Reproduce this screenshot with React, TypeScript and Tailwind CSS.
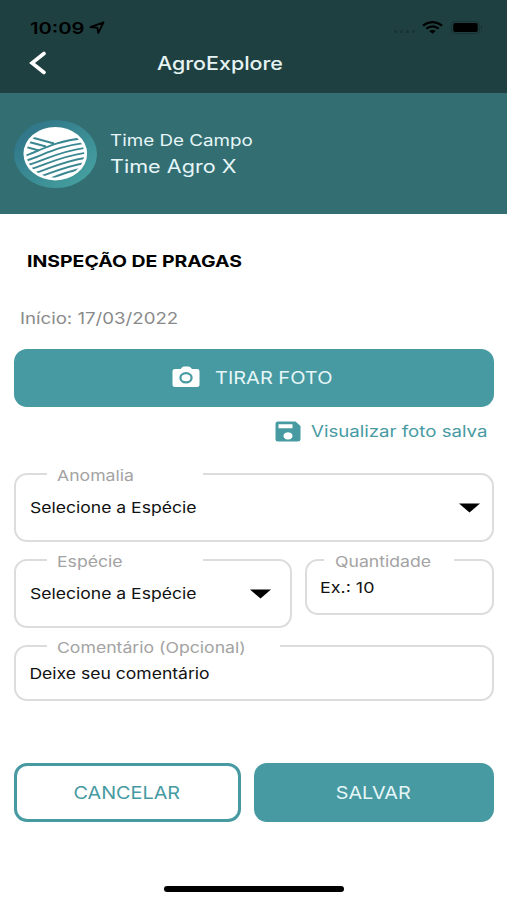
import React, { useState } from 'react';

interface FieldProps {
  label: string;
  className: string;
  notch: string;
  children: React.ReactNode;
}

const Field = ({ label, className, notch, children }: FieldProps) => (
  <div className={`relative rounded-[13px] border-2 border-[#dcdcdc] ${className}`}>
    <div className={`absolute -top-[9.5px] flex h-5 items-center bg-white ${notch}`}>
      <span className="inline-block origin-left scale-x-[1.175] whitespace-nowrap text-[15px] leading-[18px] text-[#a3a3a3]">
        {label}
      </span>
    </div>
    {children}
  </div>
);

const Caret = () => (
  <svg width="21" height="10" viewBox="0 0 21 10">
    <path d="M0 0.5h21L10.5 9.5z" fill="#000" />
  </svg>
);

const Logo = () => (
  <svg width="83" height="68" viewBox="0 0 83 68">
    <defs>
      <linearGradient id="ring" x1="0" y1="0" x2="1" y2="1">
        <stop offset="0.1" stopColor="#2f7488" />
        <stop offset="0.9" stopColor="#45a09f" />
      </linearGradient>
      <clipPath id="disc">
        <ellipse cx="41.3" cy="33.7" rx="29" ry="24" />
      </clipPath>
    </defs>
    <ellipse cx="41.5" cy="34" rx="41.5" ry="34" fill="url(#ring)" />
    <ellipse cx="41.3" cy="33.7" rx="31.8" ry="26.7" fill="#fff" />
    <g clipPath="url(#disc)" fill="none" stroke="#3a8792" strokeWidth="1.9">
      <path d="M18 17.5L40 23.5" />
      <path d="M15 22L32 26.5" />
      <path d="M12 27L25 30.5" />
      <path d="M12 35.5C26 31 38 21.5 70 18" />
      <path d="M12 40.5C28 36 42 26 74 22.5" />
      <path d="M12 45.5C30 41 44 31 74 27.5" />
      <path d="M14 50C32 45 46 36 74 32.5" />
      <path d="M18 54C36 49 48 41 74 37.5" />
      <path d="M24 57.5C40 52 52 46 74 42.5" />
      <path d="M34 59.5C46 54.5 56 51 70 48" />
    </g>
  </svg>
);

const App = () => {
  const [species] = useState('Selecione a Espécie');

  return (
    <div className="flex h-[900px] w-[507px] flex-col bg-white font-['Inter','Liberation_Sans',sans-serif]">
      <header className="h-[93px] bg-[#1f4040]">
        <div className="flex h-[38px] items-end justify-between pl-[30px] pr-[24px]">
          <div className="flex h-[21px] items-center">
            <span className="w-[59px] text-[16px] font-semibold leading-[20px] text-black">
              <span className="inline-block origin-left scale-x-[1.26]">10:09</span>
            </span>
            <svg width="16" height="13" viewBox="0 0 16 13" fill="none" stroke="#000" strokeWidth="1.9" strokeLinejoin="round">
              <path d="M1.5 6.2L14.5 1.3L9.3 11.8L8.3 6.6z" />
            </svg>
          </div>
          <div className="flex h-[21px] items-center">
            <div className="mt-2 flex gap-[3px]">
              <i className="size-[3px] rounded-full bg-[#183333]" />
              <i className="size-[3px] rounded-full bg-[#183333]" />
              <i className="size-[3px] rounded-full bg-[#183333]" />
              <i className="size-[3px] rounded-full bg-[#183333]" />
            </div>
            <svg className="ml-[7px]" width="21" height="13" viewBox="0 0 21 13" fill="none" stroke="#000" strokeWidth="2.3">
              <path d="M1 4.5Q10.5 -2.2 20 4.5" />
              <path d="M4.3 7.7Q10.5 3 16.7 7.7" />
              <path d="M7.2 10L10.5 12.7L13.8 10Q10.5 7.8 7.2 10z" fill="#000" stroke="none" />
            </svg>
            <svg className="ml-[8px]" width="32" height="13" viewBox="0 0 32 13">
              <rect x="0.5" y="0.5" width="28" height="12" rx="3.5" fill="none" stroke="#183333" />
              <rect x="2.2" y="2" width="24.6" height="9" rx="2" fill="#000" />
              <path d="M30 4.5Q32 6.5 30 8.5z" fill="#122a2a" />
            </svg>
          </div>
        </div>
        <div className="grid h-[50px] grid-cols-[1fr_auto_1fr] items-center pr-[67px]">
          <svg
            className="ml-[29px]"
            width="18"
            height="24"
            viewBox="0 0 18 24"
            fill="none"
            stroke="#fff"
            strokeWidth="3.6"
            strokeLinecap="round"
          >
            <path d="M15 2.5L3 12L15 21.5" />
          </svg>
          <h1 className="scale-x-[1.19] text-[18px] font-medium text-[#e6f3f3]">AgroExplore</h1>
        </div>
      </header>

      <section className="flex h-[121px] items-center bg-[#336e72] pl-[14px]">
        <Logo />
        <div className="ml-[13px] text-[#e6f6f8]">
          <p className="mt-px origin-left scale-x-[1.175] text-[16px] leading-[22px]">Time De Campo</p>
          <p className="mt-[3px] origin-left scale-x-[1.2] text-[18px] leading-[26px]">Time Agro X</p>
        </div>
      </section>

      <main className="flex flex-col px-[13.5px]">
        <h2 className="ml-[13px] mt-[36px] w-fit origin-left scale-x-[1.215] text-[16px] font-bold leading-[22px] text-black">
          INSPEÇÃO DE PRAGAS
        </h2>
        <p className="ml-[6.5px] mt-[35px] w-fit origin-left scale-x-[1.165] text-[16px] leading-[22px] text-[#8a8a8a]">
          Início: 17/03/2022
        </p>
        <button className="mt-[19.5px] flex h-[58px] items-center rounded-[13px] bg-[#479aa2] pl-[158px] text-[#e6f6f8]">
          <svg className="-mt-[2px]" width="28" height="22" viewBox="0 0 28 22">
            <path
              d="M3 3h5.5L10.5 1Q11 .5 12 .5h4.5q1 0 1.5.5l2 2H25q2.500 0 2.500 2v14q0 2-2.500 2H3q-2.500 0-2.500-2V5Q.5 3 3 3z"
              fill="#fff"
            />
            <ellipse cx="14" cy="11.8" rx="5.6" ry="4.6" fill="#fff" stroke="#479aa2" strokeWidth="2.2" />
          </svg>
          <span className="ml-[15.5px] origin-left scale-x-[1.175] pt-[3px] text-[17px]">TIRAR FOTO</span>
        </button>
        <a className="mt-[12.5px] flex h-[24px] items-center justify-end pr-[6px] text-[#479aa2]">
          <svg width="26" height="21" viewBox="0 0 26 21">
            <path
              fillRule="evenodd"
              d="M3 .5h17.5L25.5 5v13q0 2.500-3 2.500H3Q.5 20.500.5 18V3Q.5.5 3 .5zM3.500 3.300v4h14v-4zM13 11.200a4.500 3.700 0 1 0 .01 0z"
              fill="#479aa2"
            />
          </svg>
          <span className="ml-[35px] origin-right scale-x-[1.165] text-[16px]">Visualizar foto salva</span>
        </a>

        <Field label="Anomalia" className="mt-[30px] h-[69px]" notch="left-[31px] w-[156px] pl-[10px]">
          <div className="flex h-full items-center justify-between pl-[14px] pr-[12px]">
            <span className="origin-left scale-x-[1.17] pt-px text-[15px] text-[#111]">{species}</span>
            <Caret />
          </div>
        </Field>

        <div className="mt-[17px] flex items-start gap-[13px]">
          <Field label="Espécie" className="h-[69px] w-[278px]" notch="left-[31px] w-[156px] pl-[10px]">
            <div className="flex h-full items-center justify-between pl-[14px] pr-[19px]">
              <span className="origin-left scale-x-[1.17] pt-px text-[15px] text-[#111]">{species}</span>
              <Caret />
            </div>
          </Field>
          <Field label="Quantidade" className="h-[56px] flex-1" notch="left-[17px] w-[130px] pl-[11px]">
            <input
              className="h-full w-[100px] origin-left scale-x-[1.19] pl-[11px] text-[15px] text-[#111] outline-none placeholder:text-[#111]"
              placeholder="Ex.: 10"
            />
          </Field>
        </div>

        <Field label="Comentário (Opcional)" className="mt-[17px] h-[56px]" notch="left-[31px] w-[233px] pl-[10px]">
          <input
            className="h-full w-[300px] origin-left scale-x-[1.17] pl-[11.5px] text-[15px] text-[#111] outline-none placeholder:text-[#111]"
            placeholder="Deixe seu comentário"
          />
        </Field>

        <div className="mt-[62px] flex h-[59px] gap-[13px]">
          <button className="w-[227px] rounded-[13px] border-[3px] border-[#479aa2] pt-[3px] text-[17px] text-[#479aa2]">
            <span className="inline-block scale-x-[1.165]">CANCELAR</span>
          </button>
          <button className="flex-1 rounded-[13px] bg-[#479aa2] pt-[3px] text-[17px] text-[#e6f6f8]">
            <span className="inline-block scale-x-[1.165]">SALVAR</span>
          </button>
        </div>
      </main>

      <div className="mx-auto mb-[8px] mt-auto h-[6px] w-[180px] rounded-full bg-black" />
    </div>
  );
};

export default App;
